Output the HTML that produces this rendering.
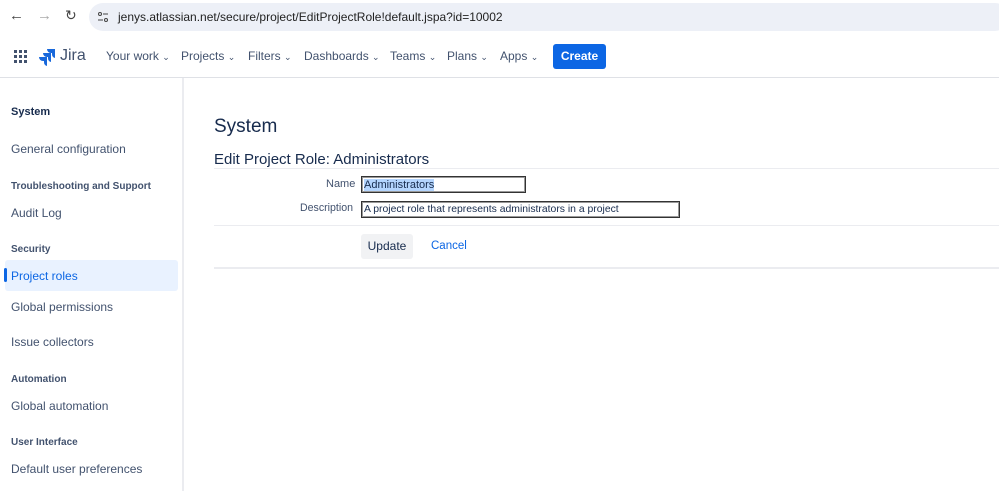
<!DOCTYPE html>
<html><head><meta charset="utf-8"><style>
*{margin:0;padding:0;box-sizing:border-box}
body{width:999px;height:491px;overflow:hidden;background:#fff;font-family:"Liberation Sans",sans-serif;color:#172b4d;position:relative}
.abs{position:absolute;white-space:nowrap}
#chrome{position:absolute;left:0;top:0;width:999px;height:34px;background:#fff}
#url{position:absolute;left:89px;top:3px;width:920px;height:28px;background:#edf0f7;border-radius:14px}
#nav{position:absolute;left:0;top:34px;width:999px;height:44px;border-bottom:1px solid #dfe1e6;background:#fff}
.nv{position:absolute;top:15px;font-size:12px;color:#42526e}
.nv small{font-size:9px}
#side{position:absolute;left:0;top:78px;width:184px;height:413px;border-right:2px solid #ebecf0}
.si{position:absolute;left:11px;font-size:12px;color:#42526e}
.sh{position:absolute;left:11px;font-size:10px;font-weight:bold;color:#42526e}
</style></head><body>
<div id="chrome">
<div class="abs" style="left:9px;top:7px;font-size:15px;color:#444">←</div>
<div class="abs" style="left:37px;top:7px;font-size:15px;color:#aaa">→</div>
<div class="abs" style="left:65px;top:7px;font-size:14px;color:#444">↻</div>
<div id="url"></div>
<svg class="abs" style="left:97px;top:11px" width="12" height="12"><circle cx="3" cy="3" r="1.5" fill="none" stroke="#444"/><line x1="6" y1="3" x2="11" y2="3" stroke="#444"/><circle cx="9" cy="9" r="1.5" fill="none" stroke="#444"/><line x1="1" y1="9" x2="6" y2="9" stroke="#444"/></svg>
<div class="abs" style="left:118px;top:10px;font-size:12px;color:#222">jenys.atlassian.net/secure/project/EditProjectRole!default.jspa?id=10002</div>
</div>
<div id="nav">
<svg class="abs" style="left:14px;top:16px" width="14" height="14" fill="#42526e"><rect x="0" y="0" width="3" height="3"/><rect x="5" y="0" width="3" height="3"/><rect x="10" y="0" width="3" height="3"/><rect x="0" y="5" width="3" height="3"/><rect x="5" y="5" width="3" height="3"/><rect x="10" y="5" width="3" height="3"/><rect x="0" y="10" width="3" height="3"/><rect x="5" y="10" width="3" height="3"/><rect x="10" y="10" width="3" height="3"/></svg>
<svg class="abs" style="left:38px;top:14px" width="18" height="18"><path d="M17 1H9a4 4 0 0 0 4 4h1v1a4 4 0 0 0 3 4z" fill="#1868db"/><path d="M13 5H5a4 4 0 0 0 4 4h1v1a4 4 0 0 0 3 4z" fill="#1868db"/><path d="M9 9H1a4 4 0 0 0 4 4h1v1a4 4 0 0 0 3 4z" fill="#1868db"/></svg>
<div class="abs" style="left:60px;top:13px;font-size:16px;color:#42526e">Jira</div>
<div class="nv" style="left:106px">Your work <small>⌄</small></div>
<div class="nv" style="left:181px">Projects <small>⌄</small></div>
<div class="nv" style="left:248px">Filters <small>⌄</small></div>
<div class="nv" style="left:304px">Dashboards <small>⌄</small></div>
<div class="nv" style="left:390px">Teams <small>⌄</small></div>
<div class="nv" style="left:447px">Plans <small>⌄</small></div>
<div class="nv" style="left:500px">Apps <small>⌄</small></div>
<div class="abs" style="left:553px;top:10px;width:53px;height:25px;background:#0c66e4;border-radius:3px;color:#fff;font-size:12px;font-weight:bold;text-align:center;line-height:25px">Create</div>
</div>
<div id="side">
<div class="sh" style="top:28px;font-size:11px;color:#172b4d">System</div>
<div class="si" style="top:64px">General configuration</div>
<div class="sh" style="top:103px">Troubleshooting and Support</div>
<div class="si" style="top:128px">Audit Log</div>
<div class="sh" style="top:166px">Security</div>
<div class="abs" style="left:5px;top:182px;width:173px;height:31px;background:#e9f2ff;border-radius:3px"></div>
<div class="abs" style="left:4px;top:190px;width:3px;height:14px;background:#0c66e4;border-radius:2px"></div>
<div class="si" style="top:191px;color:#0c66e4">Project roles</div>
<div class="si" style="top:222px">Global permissions</div>
<div class="si" style="top:257px">Issue collectors</div>
<div class="sh" style="top:296px">Automation</div>
<div class="si" style="top:321px">Global automation</div>
<div class="sh" style="top:359px">User Interface</div>
<div class="si" style="top:384px">Default user preferences</div>
</div>
<div class="abs" style="left:214px;top:116px;font-size:19px;color:#172b4d">System</div>
<div class="abs" style="left:214px;top:151px;font-size:15px;color:#172b4d">Edit Project Role: Administrators</div>
<div class="abs" style="left:214px;top:168px;width:785px;height:1px;background:#ebecf0"></div>
<div class="abs" style="left:326px;top:178px;font-size:11px;color:#42526e">Name</div>
<div class="abs" style="left:361px;top:176px;width:165px;height:17px;border:1px solid #333;box-shadow:inset 0 0 0 1px #999;font-size:11px;padding:2px 2px"><span style="background:#b4d5fe">Administrators</span></div>
<div class="abs" style="left:300px;top:202px;font-size:10.6px;color:#42526e">Description</div>
<div class="abs" style="left:361px;top:201px;width:319px;height:17px;border:1px solid #333;box-shadow:inset 0 0 0 1px #999;font-size:10.4px;padding:2px 2px">A project role that represents administrators in a project</div>
<div class="abs" style="left:214px;top:225px;width:785px;height:1px;background:#ebecf0"></div>
<div class="abs" style="left:361px;top:234px;width:52px;height:25px;background:#f1f2f4;border-radius:3px;font-size:12px;text-align:center;line-height:25px;color:#172b4d">Update</div>
<div class="abs" style="left:431px;top:240px;font-size:11.5px;color:#0c66e4">Cancel</div>
<div class="abs" style="left:214px;top:267px;width:785px;height:2px;background:#ebecf0"></div>
</body></html>
